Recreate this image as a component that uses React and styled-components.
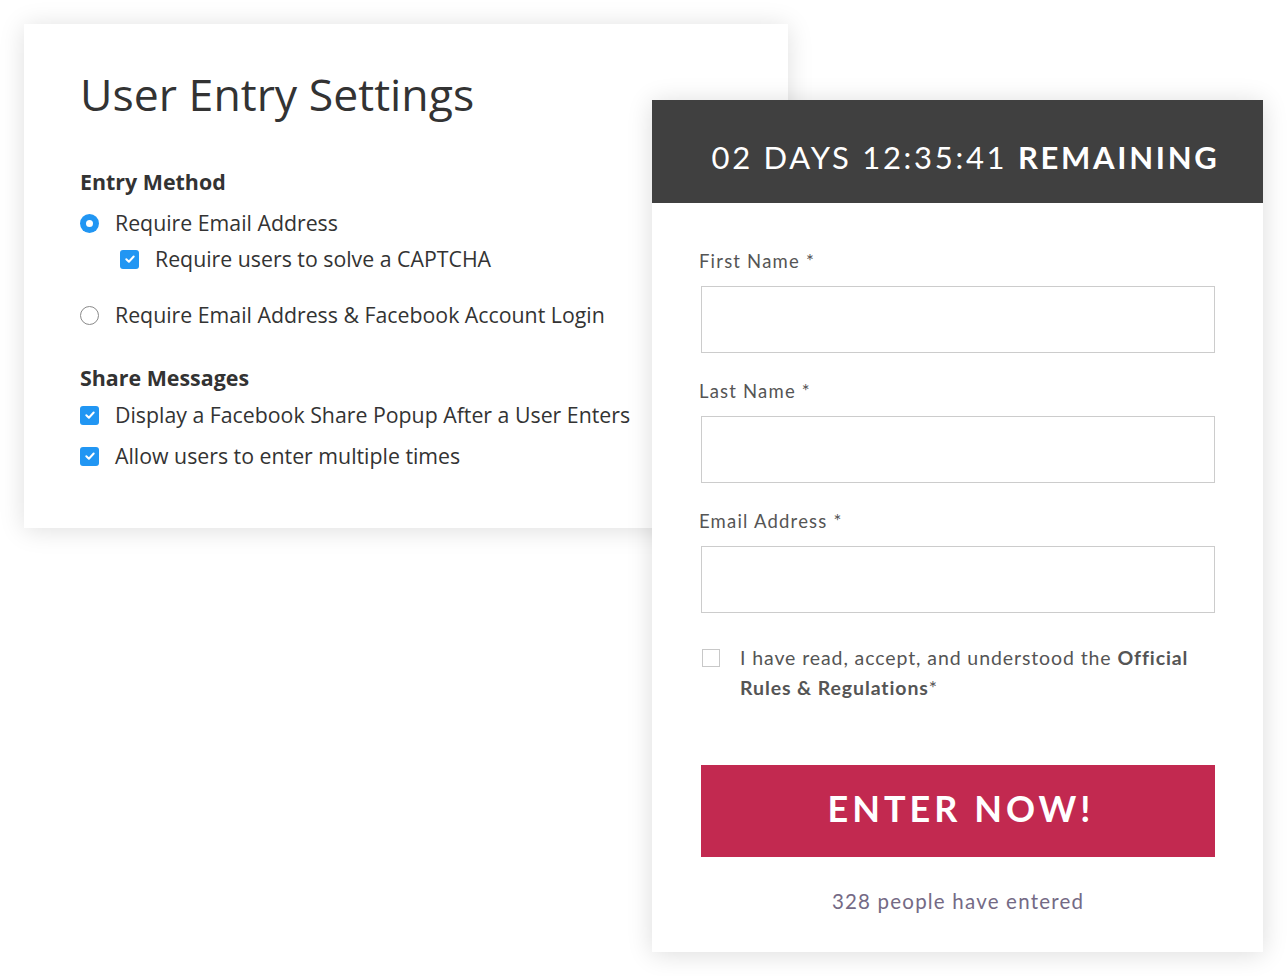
import React from "react";
import styled, { createGlobalStyle } from "styled-components";

const GlobalStyle = createGlobalStyle`
  html, body {
    margin: 0;
    padding: 0;
    background: #ffffff;
  }
  * {
    box-sizing: border-box;
  }
`;

const Stage = styled.div`
  display: grid;
  width: 1287px;
  height: 976px;
  overflow: hidden;
`;

const SettingsCard = styled.section`
  grid-area: 1 / 1;
  align-self: start;
  justify-self: start;
  margin: 24px 0 0 24px;
  width: 764px;
  height: 504px;
  background: #ffffff;
  box-shadow: 0 2px 24px rgba(0, 0, 0, 0.13);
  padding: 40px 0 0 56px;
  font-family: "Open Sans", "DejaVu Sans", sans-serif;
  color: #333333;
`;

const Title = styled.h1`
  margin: 0 0 42px;
  font-size: 44.6px;
  font-weight: 400;
  line-height: 60px;
  color: #333333;
`;

const SectionTitle = styled.h2`
  margin: 0 0 ${(p) => p.spaceAfter ?? 6}px;
  font-size: 21.4px;
  font-weight: 700;
  line-height: 32px;
  color: #333333;
`;

const Group = styled.div`
  display: flex;
  flex-direction: column;
  gap: ${(p) => p.gap || 9}px;
  margin-bottom: ${(p) => p.spaceAfter || 0}px;
`;

const Option = styled.label`
  display: flex;
  align-items: center;
  gap: 16px;
  padding-left: ${(p) => (p.nested ? 40 : 0)}px;
  margin-top: ${(p) => p.spaceBefore || 0}px;
  font-size: 21.3px;
  line-height: 32px;
  color: #333333;
`;

const Radio = styled.span`
  width: 19px;
  height: 19px;
  border-radius: 50%;
  flex-shrink: 0;
  display: flex;
  align-items: center;
  justify-content: center;
  background: ${(p) => (p.checked ? "#2196f3" : "#ffffff")};
  border: ${(p) => (p.checked ? "none" : "1.5px solid #8a8a8a")};
  &::after {
    content: "";
    display: ${(p) => (p.checked ? "block" : "none")};
    width: 7px;
    height: 7px;
    border-radius: 50%;
    background: #ffffff;
  }
`;

const CheckBox = styled.span`
  width: 19px;
  height: 19px;
  border-radius: 3px;
  flex-shrink: 0;
  background: #2196f3;
  display: flex;
  align-items: center;
  justify-content: center;
`;

const Check = () => (
  <CheckBox>
    <svg width="12" height="12" viewBox="0 0 12 12">
      <path d="M2.3 6.2 L4.9 8.7 L9.7 3.5" fill="none" stroke="#fff" strokeWidth="2" strokeLinecap="round" strokeLinejoin="round" />
    </svg>
  </CheckBox>
);

const EntryCard = styled.section`
  grid-area: 1 / 1;
  align-self: start;
  justify-self: start;
  margin: 100px 0 0 652px;
  width: 611px;
  height: 852px;
  background: #ffffff;
  box-shadow: 0 2px 24px rgba(0, 0, 0, 0.14);
  font-family: Lato, "Open Sans", sans-serif;
  display: flex;
  flex-direction: column;
`;

const Countdown = styled.header`
  height: 103px;
  background: #404040;
  color: #ffffff;
  display: flex;
  align-items: center;
  justify-content: center;
  padding-left: 16px;
  padding-top: 10px;
  font-size: 31px;
  letter-spacing: 2.7px;
  font-weight: 400;
  white-space: nowrap;
  b {
    font-weight: 700;
  }
`;

const Form = styled.div`
  padding: 44px 48px 0 49px;
  display: flex;
  flex-direction: column;
`;

const Field = styled.div`
  display: flex;
  flex-direction: column;
  margin-bottom: 24px;
`;

const Label = styled.span`
  font-size: 18.5px;
  line-height: 28px;
  letter-spacing: 1.2px;
  color: #555555;
  margin: 0 0 11px -2px;
`;

const Input = styled.div`
  height: 67px;
  border: 1px solid #cccccc;
  background: #ffffff;
`;

const Consent = styled.div`
  display: flex;
  align-items: flex-start;
  gap: 20px;
  margin-top: 6px;
  font-size: 19.5px;
  line-height: 30px;
  letter-spacing: 0.9px;
  color: #555555;
  b {
    font-weight: 700;
  }
`;

const EmptyBox = styled.span`
  width: 18px;
  height: 18px;
  border: 1px solid #c8c8c8;
  flex-shrink: 0;
  margin: 6px 0 0 1px;
`;

const EnterButton = styled.button`
  margin-top: 62px;
  height: 92px;
  width: 100%;
  border: none;
  background: #c22950;
  color: #ffffff;
  font-family: Lato, sans-serif;
  font-weight: 700;
  font-size: 36px;
  letter-spacing: 4px;
  padding: 0 0 7px 6px;
`;

const Entered = styled.p`
  margin: 32px 0 0;
  text-align: center;
  font-size: 20.5px;
  letter-spacing: 1.2px;
  color: #746a85;
`;

export default function App() {
  return (
    <>
      <GlobalStyle />
      <Stage>
        <SettingsCard>
          <Title>User Entry Settings</Title>
          <SectionTitle spaceAfter={9}>Entry Method</SectionTitle>
          <Group gap={4} spaceAfter={31}>
            <Option>
              <Radio checked />
              Require Email Address
            </Option>
            <Option nested>
              <Check />
              Require users to solve a CAPTCHA
            </Option>
            <Option spaceBefore={20}>
              <Radio />
              Require Email Address &amp; Facebook Account Login
            </Option>
          </Group>
          <SectionTitle spaceAfter={5}>Share Messages</SectionTitle>
          <Group gap={9}>
            <Option>
              <Check />
              Display a Facebook Share Popup After a User Enters
            </Option>
            <Option>
              <Check />
              Allow users to enter multiple times
            </Option>
          </Group>
        </SettingsCard>

        <EntryCard>
          <Countdown>
            02 DAYS 12:35:41&nbsp;<b>REMAINING</b>
          </Countdown>
          <Form>
            <Field>
              <Label>First Name *</Label>
              <Input />
            </Field>
            <Field>
              <Label>Last Name *</Label>
              <Input />
            </Field>
            <Field>
              <Label>Email Address *</Label>
              <Input />
            </Field>
            <Consent>
              <EmptyBox />
              <span>
                I have read, accept, and understood the <b>Official Rules &amp; Regulations</b>*
              </span>
            </Consent>
            <EnterButton>ENTER NOW!</EnterButton>
            <Entered>328 people have entered</Entered>
          </Form>
        </EntryCard>
      </Stage>
    </>
  );
}
